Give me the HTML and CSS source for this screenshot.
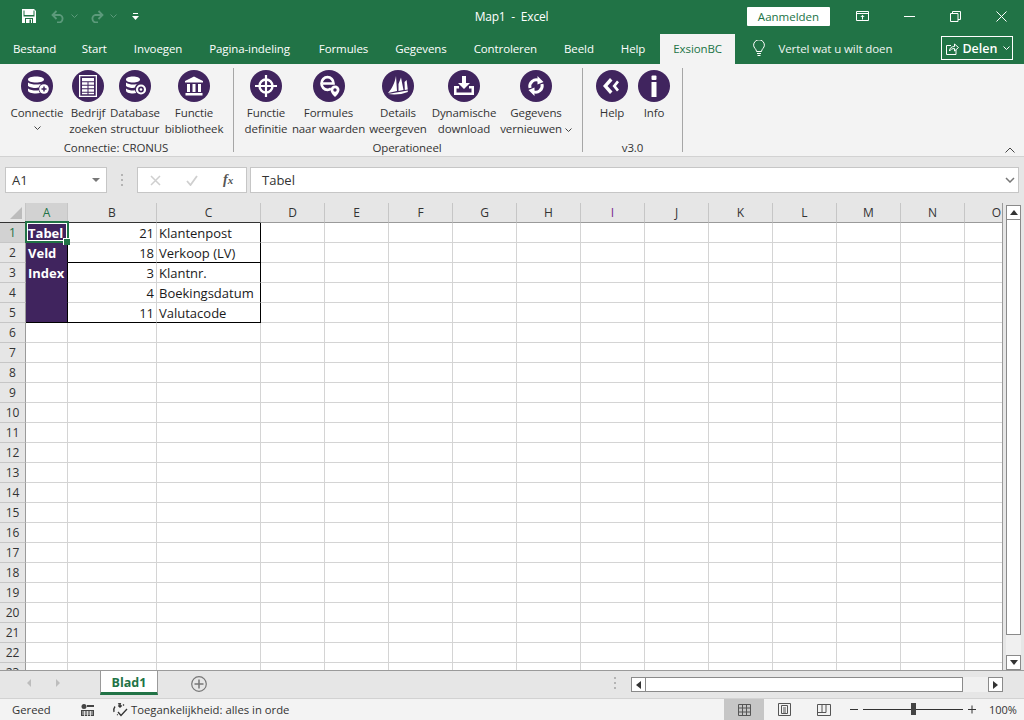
FILE: index.html
```html
<!DOCTYPE html>
<html lang="nl">
<head>
    <meta charset="UTF-8">
    <meta name="viewport" content="width=device-width, initial-scale=1.0">
    <title>Map1 - Excel</title>
    <link rel="stylesheet" href="styles.css">
</head>
<body>
<div class="app">
    <!-- title bar -->
    <div class="titlebar">
        <div class="qat">
            <svg class="qat-save" width="14" height="14" viewBox="0 0 14 14"><path d="M0 0h12l2 2v12H0z" fill="#fff"/><path d="M1.500 7.500h11V1.500h-1v4.500h-9V1.500h-1z" fill="#217346"/><path d="M3 9h8v5H3z" fill="#217346"/><path d="M4 10h6v4H4z" fill="#fff"/><path d="M7.500 10.500h1.500V14H7.500z" fill="#217346"/></svg>
            <svg class="qat-undo" width="14" height="13" viewBox="0 0 14 13"><path d="M5.500 1 1.500 5l4 4M2 5h7a4 4 0 0 1 0 7.500H6" fill="none" stroke="#5c9a7b" stroke-width="1.800"/></svg>
            <svg class="qat-chev" width="7" height="4" viewBox="0 0 7 4"><path d="m.5.500 3 3 3-3" fill="none" stroke="#5c9a7b"/></svg>
            <svg class="qat-redo" width="14" height="13" viewBox="0 0 14 13"><path d="m8.500 1 4 4-4 4M12 5H5a4 4 0 0 0 0 7.500h3" fill="none" stroke="#5c9a7b" stroke-width="1.800"/></svg>
            <svg class="qat-chev" width="7" height="4" viewBox="0 0 7 4"><path d="m.5.500 3 3 3-3" fill="none" stroke="#5c9a7b"/></svg>
            <svg class="qat-more" width="7" height="7" viewBox="0 0 7 7"><path d="M1 0h5v1H1zM0 3h7L3.500 7z" fill="#fff"/></svg>
        </div>
        <div class="doc-title">Map1 &nbsp;-&nbsp; Excel</div>
        <button class="signin">Aanmelden</button>
        <div class="winbtns">
            <svg width="13" height="10" viewBox="0 0 13 10"><path d="M.5.500h12v9H.500zM1 2.500h11M6.500 8.500V4.500M4.800 6l1.700-1.700L8.200 6" fill="none" stroke="#fff"/></svg>
            <svg width="11" height="1" viewBox="0 0 11 1"><rect width="11" height="1" fill="#fff"/></svg>
            <svg width="11" height="11" viewBox="0 0 11 11"><path d="M.5 2.500h7.500v8H.500zM2.500 2.500v-2h8v8H8" fill="none" stroke="#fff"/></svg>
            <svg width="11" height="11" viewBox="0 0 11 11"><path d="m.5.500 10 10M10.500.500l-10 10" fill="none" stroke="#fff"/></svg>
        </div>
    </div>

    <!-- tabs -->
    <div class="tabs">
        <span class="tab tab-first">Bestand</span>
        <span class="tab">Start</span>
        <span class="tab">Invoegen</span>
        <span class="tab tab-wide">Pagina-indeling</span>
        <span class="tab">Formules</span>
        <span class="tab">Gegevens</span>
        <span class="tab">Controleren</span>
        <span class="tab">Beeld</span>
        <span class="tab">Help</span>
        <span class="tab tab-active">ExsionBC</span>
        <svg class="bulb" width="12" height="16" viewBox="0 0 12 16"><path d="M3.500 11.500C3.500 9 .6 8 .6 5.200a5.400 5.400 0 0 1 10.800 0C11.400 8 8.500 9 8.500 11.500zM4 13.500h4M4.500 15.500h3" fill="none" stroke="#fff" stroke-width="1"/></svg>
        <span class="tell">Vertel wat u wilt doen</span>
        <div class="share">
            <svg width="13" height="13" viewBox="0 0 13 13"><path d="M5 3.500H.5v9h9.500V8M3.500 9c0-3 2-4.500 5-4.500V2l4 3.500-4 3.500V6.500c-2 0-4 .8-5 2.500z" fill="none" stroke="#fff"/></svg>
            <b>Delen</b>
            <svg width="7" height="4" viewBox="0 0 7 4"><path d="m.5.500 3 3 3-3" fill="none" stroke="#fff"/></svg>
        </div>
    </div>

    <!-- ribbon -->
    <div class="ribbon">
        <div class="group group-1">
            <div class="buttons">
                <div class="rb w60">
                    <svg class="ic" viewBox="0 0 32 32"><circle cx="16" cy="16" r="16"/><path class="g" d="M7 9.500c0-2 3.500-3 8-3s8 1 8 3-3.500 3-8 3-8-1-8-3zM7 12.500c2 1.600 5 2 8 2s5-.3 7-1.300c-2.500.7-4 2.600-4.300 4.400-1 .2-1.800.3-2.700.3-3 0-6-.4-8-2zM7 18.500c2 1.600 5 2 8 2 .8 0 1.800 0 2.700-.2.200 1 .6 2 1.300 2.800-1 .3-2.500.4-4 .4-4.500 0-8-1-8-3z"/><circle class="g" cx="23" cy="19" r="4.800"/><path d="M23 16.500v5M20.500 19h5" stroke="#40245e" stroke-width="1.500"/></svg>
                    <span>Connectie</span>
                    <svg class="chev-line" width="7" height="4" viewBox="0 0 7 4"><path d="m.5.500 3 3 3-3" fill="none" stroke="#444"/></svg>
                </div>
                <div class="rb w42">
                    <svg class="ic" viewBox="0 0 32 32"><circle cx="16" cy="16" r="16"/><path class="g" d="M7 5h18v22H7zM8.300 6.300v19.400h15.400V6.300z"/><path class="g" d="M10 8h12v3.200H10zM10 12.300h5.500v2.400H10zM16.500 12.300H22v2.400h-5.500zM10 15.800h5.500v2.400H10zM16.500 15.800H22v2.400h-5.500zM10 19.300h5.500v2.400H10zM16.500 19.300H22v2.400h-5.500zM10 22.700h5.500v1.600H10zM16.500 22.700H22v1.600h-5.500z"/></svg>
                    <span>Bedrijf<br>zoeken</span>
                </div>
                <div class="rb w52">
                    <svg class="ic" viewBox="0 0 32 32"><circle cx="16" cy="16" r="16"/><path class="g" d="M7 9.500c0-2 3-3 7-3s7 1 7 3-3 3-7 3-7-1-7-3zM7 12.500c2 1.500 4.500 2 7 2s4-.3 6-1.300c-2.500.7-3.800 2.600-4 4.400-.8.200-1.300.3-2 .3-2.500 0-5-.4-7-2zM7 18.500c2 1.500 4.500 2 7 2 .7 0 1.300 0 2-.2.200 1 .6 2 1.300 2.800-1 .3-2 .4-3.300.4-4 0-7-1-7-3z"/><circle cx="22" cy="19.500" r="4" fill="none" stroke="#fff" stroke-width="2.200"/><circle class="g" cx="22" cy="19.500" r="1.300"/></svg>
                    <span>Database<br>structuur</span>
                </div>
                <div class="rb w66">
                    <svg class="ic" viewBox="0 0 32 32"><circle cx="16" cy="16" r="16"/><path class="g" d="M16 6.500 25 11v1.500H7V11zM9 14h3v8H9zM14.500 14h3v8h-3zM20 14h3v8h-3zM7.500 23h17v2.500h-17z"/></svg>
                    <span>Functie<br>bibliotheek</span>
                </div>
            </div>
            <div class="group-label">Connectie: CRONUS</div>
        </div>
        <div class="group group-2">
            <div class="buttons">
                <div class="rb w52">
                    <svg class="ic" viewBox="0 0 32 32"><circle cx="16" cy="16" r="16"/><circle cx="16" cy="16" r="6.500" fill="none" stroke="#fff" stroke-width="2.400"/><path d="M16 5v22M5 16h22" stroke="#fff" stroke-width="2.200"/></svg>
                    <span>Functie<br>definitie</span>
                </div>
                <div class="rb w73">
                    <svg class="ic" viewBox="0 0 32 32"><circle cx="16" cy="16" r="16"/><path d="M18 18.500c-1 .8-2.300 1.300-3.500 1.300-3.300 0-6-2.800-6-6.300s2.700-6.300 6-6.300 6 2.800 6 6.300H10" fill="none" stroke="#fff" stroke-width="2.700"/><path class="g" d="M22 15.500a4.500 4.500 0 0 1 4.500 4.500c0 2.500-2.500 5-4.500 7-2-2-4.500-4.500-4.500-7a4.500 4.500 0 0 1 4.500-4.500z"/><circle cx="22" cy="20" r="1.700"/></svg>
                    <span>Formules<br>naar waarden</span>
                </div>
                <div class="rb w66">
                    <svg class="ic" viewBox="0 0 32 32"><circle cx="16" cy="16" r="16"/><path class="g" d="M6 23C10 19 13 12 14 6l1 15zM16.500 14 19 7.500 21.500 20l-5 1zM22.500 12l2.100-2 1.200 9.500-3 .5zM6 24l19.800-3.500V22C20 24.500 12 25 6 24z"/></svg>
                    <span>Details<br>weergeven</span>
                </div>
                <div class="rb w66">
                    <svg class="ic" viewBox="0 0 32 32"><circle cx="16" cy="16" r="16"/><path class="g" d="M14 6h4v7h4l-6 6-6-6h4zM6 16h5v2.500H8.500v4h15v-4H21V16h5v9H6z"/></svg>
                    <span>Dynamische<br>download</span>
                </div>
                <div class="rb w78">
                    <svg class="ic" viewBox="0 0 32 32"><circle cx="16" cy="16" r="16"/><path d="M10 18a6.500 6.500 0 0 1 9-7.500M22 14a6.500 6.500 0 0 1-9 7.500" fill="none" stroke="#fff" stroke-width="3"/><path class="g" d="M17.500 6l6 6-6 2.500zM14.500 26l-6-6 6-2.500z"/></svg>
                    <span>Gegevens<br>vernieuwen <svg class="chev-inline" width="7" height="4" viewBox="0 0 7 4"><path d="m.5.500 3 3 3-3" fill="none" stroke="#444"/></svg></span>
                </div>
            </div>
            <div class="group-label">Operationeel</div>
        </div>
        <div class="group group-3">
            <div class="buttons">
                <div class="rb w42">
                    <svg class="ic" viewBox="0 0 32 32"><circle cx="16" cy="16" r="16"/><path class="g" d="M14 8 7 16l7 8 2.500-2.500L11.500 16l5-5.500zM21 10.500 16.500 16l4.500 5.500 2-1.800L20 16l3-3.700z"/></svg>
                    <span>Help</span>
                </div>
                <div class="rb w42">
                    <svg class="ic" viewBox="0 0 32 32"><circle cx="16" cy="16" r="16"/><rect class="g" x="13.500" y="5.500" width="5" height="4.500" rx="1"/><rect class="g" x="13.500" y="12" width="5" height="15"/></svg>
                    <span>Info</span>
                </div>
            </div>
            <div class="group-label">v3.0</div>
        </div>
        <svg class="collapse" width="10" height="6" viewBox="0 0 10 6"><path d="m.5 5.500 4.500-4.500 4.500 4.500" fill="none" stroke="#444"/></svg>
    </div>

    <!-- formula bar -->
    <div class="formula">
        <div class="namebox"><span>A1</span><i class="caret"></i></div>
        <div class="dots"><i></i><i></i><i></i></div>
        <div class="fx-btns">
            <svg width="11" height="11" viewBox="0 0 11 11"><path d="m1 1 9 9M10 1l-9 9" stroke="#cfcfcf" stroke-width="1.500"/></svg>
            <svg width="12" height="11" viewBox="0 0 12 11"><path d="m1 6 3.500 4L11 1" fill="none" stroke="#cfcfcf" stroke-width="1.800"/></svg>
            <em>f<small>x</small></em>
        </div>
        <div class="fx-input"><span>Tabel</span>
            <svg width="10" height="6" viewBox="0 0 10 6"><path d="m1 1 4 4 4-4" fill="none" stroke="#777" stroke-width="1.500"/></svg>
        </div>
    </div>

    <!-- sheet -->
    <div class="sheet-wrap">
        <div class="sheet">
            <table class="grid">
                <colgroup>
                    <col class="c-head"><col class="c-a"><col class="c-b"><col class="c-c">
                    <col><col><col><col><col><col><col><col><col><col><col><col>
                </colgroup>
                <thead>
                    <tr><th class="corner"><i></i></th><th class="sel-col">A</th><th>B</th><th>C</th><th>D</th><th>E</th><th>F</th><th>G</th><th>H</th><th class="purple-i">I</th><th>J</th><th>K</th><th>L</th><th>M</th><th>N</th><th>O</th></tr>
                </thead>
                <tbody>
                    <tr><th class="sel-row">1</th><td class="lbl">Tabel</td><td class="num">21</td><td class="txt br">Klantenpost</td><td></td><td></td><td></td><td></td><td></td><td></td><td></td><td></td><td></td><td></td><td></td><td></td></tr>
                    <tr><th>2</th><td class="lbl">Veld</td><td class="num bb">18</td><td class="txt bb br">Verkoop (LV)</td><td></td><td></td><td></td><td></td><td></td><td></td><td></td><td></td><td></td><td></td><td></td><td></td></tr>
                    <tr><th>3</th><td class="lbl">Index</td><td class="num">3</td><td class="txt br">Klantnr.</td><td></td><td></td><td></td><td></td><td></td><td></td><td></td><td></td><td></td><td></td><td></td><td></td></tr>
                    <tr><th>4</th><td class="lbl"></td><td class="num">4</td><td class="txt br">Boekingsdatum</td><td></td><td></td><td></td><td></td><td></td><td></td><td></td><td></td><td></td><td></td><td></td><td></td></tr>
                    <tr><th>5</th><td class="lbl bb"></td><td class="num bb">11</td><td class="txt bb br">Valutacode</td><td></td><td></td><td></td><td></td><td></td><td></td><td></td><td></td><td></td><td></td><td></td><td></td></tr>
                    <tr><th>6</th><td></td><td></td><td></td><td></td><td></td><td></td><td></td><td></td><td></td><td></td><td></td><td></td><td></td><td></td><td></td></tr>
                    <tr><th>7</th><td></td><td></td><td></td><td></td><td></td><td></td><td></td><td></td><td></td><td></td><td></td><td></td><td></td><td></td><td></td></tr>
                    <tr><th>8</th><td></td><td></td><td></td><td></td><td></td><td></td><td></td><td></td><td></td><td></td><td></td><td></td><td></td><td></td><td></td></tr>
                    <tr><th>9</th><td></td><td></td><td></td><td></td><td></td><td></td><td></td><td></td><td></td><td></td><td></td><td></td><td></td><td></td><td></td></tr>
                    <tr><th>10</th><td></td><td></td><td></td><td></td><td></td><td></td><td></td><td></td><td></td><td></td><td></td><td></td><td></td><td></td><td></td></tr>
                    <tr><th>11</th><td></td><td></td><td></td><td></td><td></td><td></td><td></td><td></td><td></td><td></td><td></td><td></td><td></td><td></td><td></td></tr>
                    <tr><th>12</th><td></td><td></td><td></td><td></td><td></td><td></td><td></td><td></td><td></td><td></td><td></td><td></td><td></td><td></td><td></td></tr>
                    <tr><th>13</th><td></td><td></td><td></td><td></td><td></td><td></td><td></td><td></td><td></td><td></td><td></td><td></td><td></td><td></td><td></td></tr>
                    <tr><th>14</th><td></td><td></td><td></td><td></td><td></td><td></td><td></td><td></td><td></td><td></td><td></td><td></td><td></td><td></td><td></td></tr>
                    <tr><th>15</th><td></td><td></td><td></td><td></td><td></td><td></td><td></td><td></td><td></td><td></td><td></td><td></td><td></td><td></td><td></td></tr>
                    <tr><th>16</th><td></td><td></td><td></td><td></td><td></td><td></td><td></td><td></td><td></td><td></td><td></td><td></td><td></td><td></td><td></td></tr>
                    <tr><th>17</th><td></td><td></td><td></td><td></td><td></td><td></td><td></td><td></td><td></td><td></td><td></td><td></td><td></td><td></td><td></td></tr>
                    <tr><th>18</th><td></td><td></td><td></td><td></td><td></td><td></td><td></td><td></td><td></td><td></td><td></td><td></td><td></td><td></td><td></td></tr>
                    <tr><th>19</th><td></td><td></td><td></td><td></td><td></td><td></td><td></td><td></td><td></td><td></td><td></td><td></td><td></td><td></td><td></td></tr>
                    <tr><th>20</th><td></td><td></td><td></td><td></td><td></td><td></td><td></td><td></td><td></td><td></td><td></td><td></td><td></td><td></td><td></td></tr>
                    <tr><th>21</th><td></td><td></td><td></td><td></td><td></td><td></td><td></td><td></td><td></td><td></td><td></td><td></td><td></td><td></td><td></td></tr>
                    <tr><th>22</th><td></td><td></td><td></td><td></td><td></td><td></td><td></td><td></td><td></td><td></td><td></td><td></td><td></td><td></td><td></td></tr>
                    <tr><th>23</th><td></td><td></td><td></td><td></td><td></td><td></td><td></td><td></td><td></td><td></td><td></td><td></td><td></td><td></td><td></td></tr>
                </tbody>
            </table>
            <div class="selection"><i></i></div>
        </div>
        <div class="vscroll">
            <div class="sb-btn"><i class="tri-up"></i></div>
            <div class="sb-thumb"></div>
            <div class="sb-track"></div>
            <div class="sb-btn"><i class="tri-down"></i></div>
        </div>
    </div>

    <!-- sheet tabs -->
    <div class="sheetbar">
        <div class="nav"><i class="tri-left-grey"></i><i class="tri-right-grey"></i></div>
        <div class="sheet-tab">Blad1</div>
        <svg class="add" width="16" height="16" viewBox="0 0 16 16"><circle cx="8" cy="8" r="7.300" fill="none" stroke="#777" stroke-width="1.200"/><path d="M8 3.500v9M3.500 8h9" stroke="#777" stroke-width="1.500"/></svg>
        <div class="dots dots-h"><i></i><i></i><i></i></div>
        <div class="hscroll">
            <div class="sb-btn"><i class="tri-left"></i></div>
            <div class="sb-thumb"></div>
            <div class="sb-track"></div>
            <div class="sb-btn"><i class="tri-right"></i></div>
        </div>
    </div>

    <!-- status bar -->
    <div class="status">
        <span class="ready">Gereed</span>
        <svg class="macro" width="13" height="12" viewBox="0 0 13 12"><circle cx="3" cy="2.500" r="2.500" fill="#444"/><path d="M6 1h7v2H6zM0 6h13v6H0z" fill="#444"/><path d="M1 8h11M1 10h11M3.500 7v5M6.500 7v5M9.500 7v5" stroke="#f3f3f3" stroke-width=".8"/></svg>
        <svg class="access" width="16" height="16" viewBox="0 0 16 16"><path d="M3 4.500a6 6 0 0 0-1 5.500M5 12.500l.8.500M6 1.800A6 6 0 0 1 9 1.800M11 2.500l1 1M6 10l3 3.500 6-6.500M8 1v4M6.300 3.500 8 5.200 9.700 3.500" fill="none" stroke="#333" stroke-width="1.300"/></svg>
        <span class="access-text">Toegankelijkheid: alles in orde</span>
        <div class="views">
            <div class="view view-on"><svg width="13" height="12" viewBox="0 0 13 12"><path d="M.5.500h12v11H.500zM.5 4h12M.5 8h12M4.500.500v11M8.500.500v11" fill="none" stroke="#555"/></svg></div>
            <div class="view"><svg width="13" height="13" viewBox="0 0 13 13"><path d="M.5.500h12v12H.500zM3.500 2.500h6v8h-6zM5 5h3M5 7h3M5 9h3" fill="none" stroke="#555"/></svg></div>
            <div class="view"><svg width="14" height="12" viewBox="0 0 14 12"><path d="M.5.500h13v11H.500zM.5 8.500h8.500M9 .500v8M5 .500v8" fill="none" stroke="#555"/></svg></div>
        </div>
        <div class="zoom">
            <svg width="9" height="9" viewBox="0 0 9 9"><path d="M0 4.500h8" stroke="#333"/></svg>
            <div class="slider"><i></i></div>
            <svg width="9" height="9" viewBox="0 0 9 9"><path d="M0 4.500h8M4 .500v8" stroke="#333"/></svg>
            <span>100%</span>
        </div>
    </div>
</div>
</body>
</html>
```
FILE: styles.css
```css
* { box-sizing: border-box; }
html, body { margin: 0; padding: 0; }
body {
    font-family: "Open Sans", "Noto Sans", sans-serif;
    font-size: 12px;
    color: #333;
    background: #e6e6e6;
}
svg { display: block; flex: none; }

.app {
    width: 1024px;
    height: 720px;
    display: flex;
    flex-direction: column;
    overflow: hidden;
}

/* title bar */
.titlebar {
    height: 32px;
    flex: none;
    display: flex;
    align-items: center;
    background: #217346;
    color: #fff;
}
.qat {
    width: 339px;
    display: flex;
    align-items: center;
    padding-left: 22px;
}
.qat-undo { margin-left: 15px; }
.qat-redo { margin-left: 12px; }
.qat .qat-chev { margin-left: 6px; }
.qat-more { margin-left: 15px; }
.doc-title {
    width: 345px;
    text-align: center;
    font-size: 12px;
    letter-spacing: -0.2px;
    white-space: nowrap;
}
.signin {
    width: 83px;
    height: 19px;
    margin-left: 63px;
    border: 0;
    border-radius: 1px;
    padding: 0;
    background: #fff;
    color: #217346;
    font: 11.500px "Open Sans", sans-serif;
}
.winbtns {
    display: flex;
    align-items: center;
    margin-left: 26px;
    gap: 35px;
}

/* tabs */
.tabs {
    height: 32px;
    flex: none;
    display: flex;
    align-items: center;
    background: #217346;
    color: #fff;
    font-size: 11.500px;
    letter-spacing: -0.1px;
}
.tab {
    height: 32px;
    line-height: 33px;
    padding: 0 13.500px;
    white-space: nowrap;
}
.tab-first { padding: 0 12px 0 13px; }
.tab-wide { padding-right: 15.500px; }
.tab-active {
    align-self: flex-end;
    height: 30px;
    line-height: 29px;
    margin-left: 1px;
    background: #f3f3f3;
    color: #217346;
}
.bulb { margin-left: 18px; }
.tell { margin-left: 13px; width: 163px; white-space: nowrap; color: #f0f5f2; }
.share {
    width: 72px;
    height: 24px;
    display: flex;
    align-items: center;
    padding-left: 4px;
    gap: 3px;
    border: 1px solid #fff;
    letter-spacing: 0;
}
.share b { font-size: 12.500px; font-weight: 600; margin-right: 3px; }

/* ribbon */
.ribbon {
    position: relative;
    height: 93px;
    flex: none;
    display: flex;
    background: #f3f3f3;
    border-bottom: 1px solid #d2d2d2;
}
.group {
    margin-top: 4px;
    height: 84px;
    display: flex;
    flex-direction: column;
    border-right: 1px solid #a6a6a6;
    font-size: 11.500px;
    letter-spacing: -0.1px;
}
.group-1 { width: 234px; padding-left: 7px; }
.group-2 { width: 349px; padding-left: 6px; }
.group-3 { width: 100px; padding-left: 8px; }
.buttons { height: 72px; flex: none; display: flex; }
.group-label {
    height: 12px;
    line-height: 16px;
    text-align: center;
    white-space: nowrap;
    margin-left: -8px;
}
.rb {
    flex: none;
    display: flex;
    flex-direction: column;
    align-items: center;
    padding-top: 2px;
    text-align: center;
    line-height: 16px;
    white-space: nowrap;
}
.rb span { margin-top: 3px; }
.w42 { width: 42px; }
.w52 { width: 52px; }
.w60 { width: 60px; }
.w66 { width: 66px; }
.w73 { width: 73px; }
.w78 { width: 78px; }
.ic { width: 32px; height: 32px; fill: #40245e; }
.ic .g { fill: #fff; fill-rule: evenodd; }
.chev-line { margin-top: 5px; }
.chev-inline { display: inline-block; vertical-align: middle; }
.collapse { position: absolute; right: 9px; bottom: 3px; }

/* formula bar */
.formula {
    height: 46px;
    flex: none;
    display: flex;
    align-items: flex-start;
    padding: 10px 5px 0;
    background: #e6e6e6;
}
.namebox, .fx-btns, .fx-input {
    height: 26px;
    display: flex;
    align-items: center;
    background: #fff;
    border: 1px solid #c6c6c6;
    font-size: 13px;
}
.namebox {
    width: 102px;
    justify-content: space-between;
    padding: 0 6px;
}
.caret {
    border: 4px solid transparent;
    border-top: 4px solid #777;
    border-bottom: 0;
    width: 8px;
    height: 4px;
}
.dots {
    width: 30px;
    display: flex;
    flex-direction: column;
    align-items: center;
    gap: 3px;
    padding-top: 7px;
}
.dots i { width: 2px; height: 2px; background: #b4b4b4; }
.fx-btns {
    width: 110px;
    padding-left: 12px;
    gap: 25px;
    margin-right: 3px;
}
.fx-btns em { font: italic bold 14px "Liberation Serif", serif; color: #555; }
.fx-btns small { font-size: 11px; }
.fx-input {
    width: 769px;
    justify-content: space-between;
    padding: 0 3px 0 11px;
}

/* sheet */
.sheet-wrap {
    height: 468px;
    flex: none;
    display: flex;
}
.sheet {
    position: relative;
    width: 1003px;
    height: 468px;
    overflow: hidden;
    background: #fff;
    border-bottom: 1px solid #9a9a9a;
    border-right: 1px solid #9a9a9a;
}
.grid {
    table-layout: fixed;
    border-collapse: separate;
    border-spacing: 0;
    width: 1029px;
    font-size: 13px;
}
.grid col { width: 64px; }
.grid .c-head { width: 26px; }
.grid .c-a { width: 42px; }
.grid .c-b { width: 89px; }
.grid .c-c { width: 104px; }
.grid thead th {
    height: 20px;
    padding: 0;
    font-weight: 400;
    font-size: 12px;
    background: #e6e6e6;
    border-right: 1px solid #c6c6c6;
    border-bottom: 1px solid #9a9a9a;
    color: #333;
}
.grid thead .sel-col {
    background: #d2d2d2;
    color: #217346;
}
.grid thead .purple-i { color: #7b2c8c; }
.corner { position: relative; }
.corner i {
    position: absolute;
    right: 3px;
    bottom: 3px;
    border-left: 12px solid transparent;
    border-bottom: 12px solid #bcbcbc;
}
.grid tbody th {
    height: 20px;
    padding: 0;
    font-weight: 400;
    font-size: 12px;
    background: #e6e6e6;
    border-right: 1px solid #9a9a9a;
    border-bottom: 1px solid #c6c6c6;
    color: #333;
}
.grid tbody .sel-row { background: #d2d2d2; color: #217346; }
.grid td {
    height: 20px;
    padding: 0 2px;
    border-right: 1px solid #d4d4d4;
    border-bottom: 1px solid #d4d4d4;
    white-space: nowrap;
    color: #1a1a1a;
}
.grid td.lbl {
    background: #40245e;
    color: #fff;
    font-weight: 700;
    border-bottom-color: #40245e;
    border-right: 1px solid #000;
}
.grid td.num { text-align: right; }
.grid td.br { border-right: 1px solid #000; }
.grid td.bb { border-bottom: 1px solid #000; }
.grid thead th:nth-child(-n+4) { border-bottom-color: #333; }
.grid thead th.sel-col { border-bottom-color: #217346; }
.selection {
    position: absolute;
    left: 25px;
    top: 18px;
    width: 44px;
    height: 22px;
    border: 2px solid #217346;
    box-shadow: inset 0 0 0 1px #fff;
}
.selection i {
    position: absolute;
    right: -3px;
    bottom: -4px;
    width: 7px;
    height: 7px;
    background: #217346;
    border-left: 1px solid #fff;
    border-top: 1px solid #fff;
}

/* scrollbars */
.vscroll {
    width: 21px;
    display: flex;
    flex-direction: column;
    padding: 2px 3px 0 3px;
    background: #e6e6e6;
    border-bottom: 1px solid #9a9a9a;
}
.vscroll .sb-btn { height: 15px; }
.vscroll .sb-thumb { height: 416px; margin-top: -1px; }
.vscroll .sb-track { flex: 1; background: #f0f0f0; }
.sb-btn {
    flex: none;
    display: flex;
    align-items: center;
    justify-content: center;
    background: #fff;
    border: 1px solid #8a8a8a;
}
.sb-thumb {
    background: #fff;
    border: 1px solid #8a8a8a;
}
.tri-up, .tri-down, .tri-left, .tri-right, .tri-left-grey, .tri-right-grey {
    display: block;
    width: 0;
    height: 0;
    border-style: solid;
    border-color: transparent;
}
.tri-up { border-width: 0 4px 5px; border-bottom-color: #333; }
.tri-down { border-width: 5px 4px 0; border-top-color: #333; }
.tri-left { border-width: 4px 5px 4px 0; border-right-color: #333; }
.tri-right { border-width: 4px 0 4px 5px; border-left-color: #333; }
.tri-left-grey { border-width: 4px 4px 4px 0; border-right-color: #bdbdbd; }
.tri-right-grey { border-width: 4px 0 4px 4px; border-left-color: #bdbdbd; }

/* sheet tabs */
.sheetbar {
    height: 27px;
    flex: none;
    display: flex;
    background: #e6e6e6;
}
.nav {
    width: 100px;
    display: flex;
    align-items: center;
    gap: 25px;
    padding-left: 27px;
    height: 24px;
}
.sheet-tab {
    width: 58px;
    height: 24px;
    background: #fff;
    border: 1px solid #9a9a9a;
    border-top: 0;
    border-bottom: 3px solid #217346;
    color: #217346;
    font-weight: 700;
    font-size: 12.500px;
    text-align: center;
    line-height: 23px;
}
.add { margin: 5px 0 0 33px; }
.dots-h { margin-left: 393px; padding-top: 6px; }
.hscroll {
    display: flex;
    width: 372px;
    height: 15px;
    margin-top: 6px;
    margin-left: 1px;
    background: #f0f0f0;
}
.hscroll .sb-btn { width: 15px; }
.hscroll .sb-thumb { width: 318px; margin-left: -1px; }
.hscroll .sb-track { flex: 1; }

/* status bar */
.status {
    flex: 1;
    display: flex;
    align-items: center;
    background: #f3f3f3;
    border-top: 1px solid #d2d2d2;
    font-size: 11.300px;
    white-space: nowrap;
}
.ready { width: 81px; padding-left: 12px; }
.access { margin-left: 18px; }
.access-text { width: 593px; margin-left: 3px; }
.views { display: flex; height: 100%; }
.view {
    width: 40px;
    display: flex;
    align-items: center;
    justify-content: center;
}
.view-on { background: #c6c6c6; }
.zoom {
    display: flex;
    align-items: center;
    margin-left: 6px;
}
.slider {
    position: relative;
    width: 100px;
    height: 1px;
    margin: 0 5px 0 4px;
    background: #333;
}
.slider i {
    position: absolute;
    left: 48px;
    top: -6px;
    width: 5px;
    height: 12px;
    background: #444;
}
.zoom span { margin-left: 12px; font-size: 11px; }
```
